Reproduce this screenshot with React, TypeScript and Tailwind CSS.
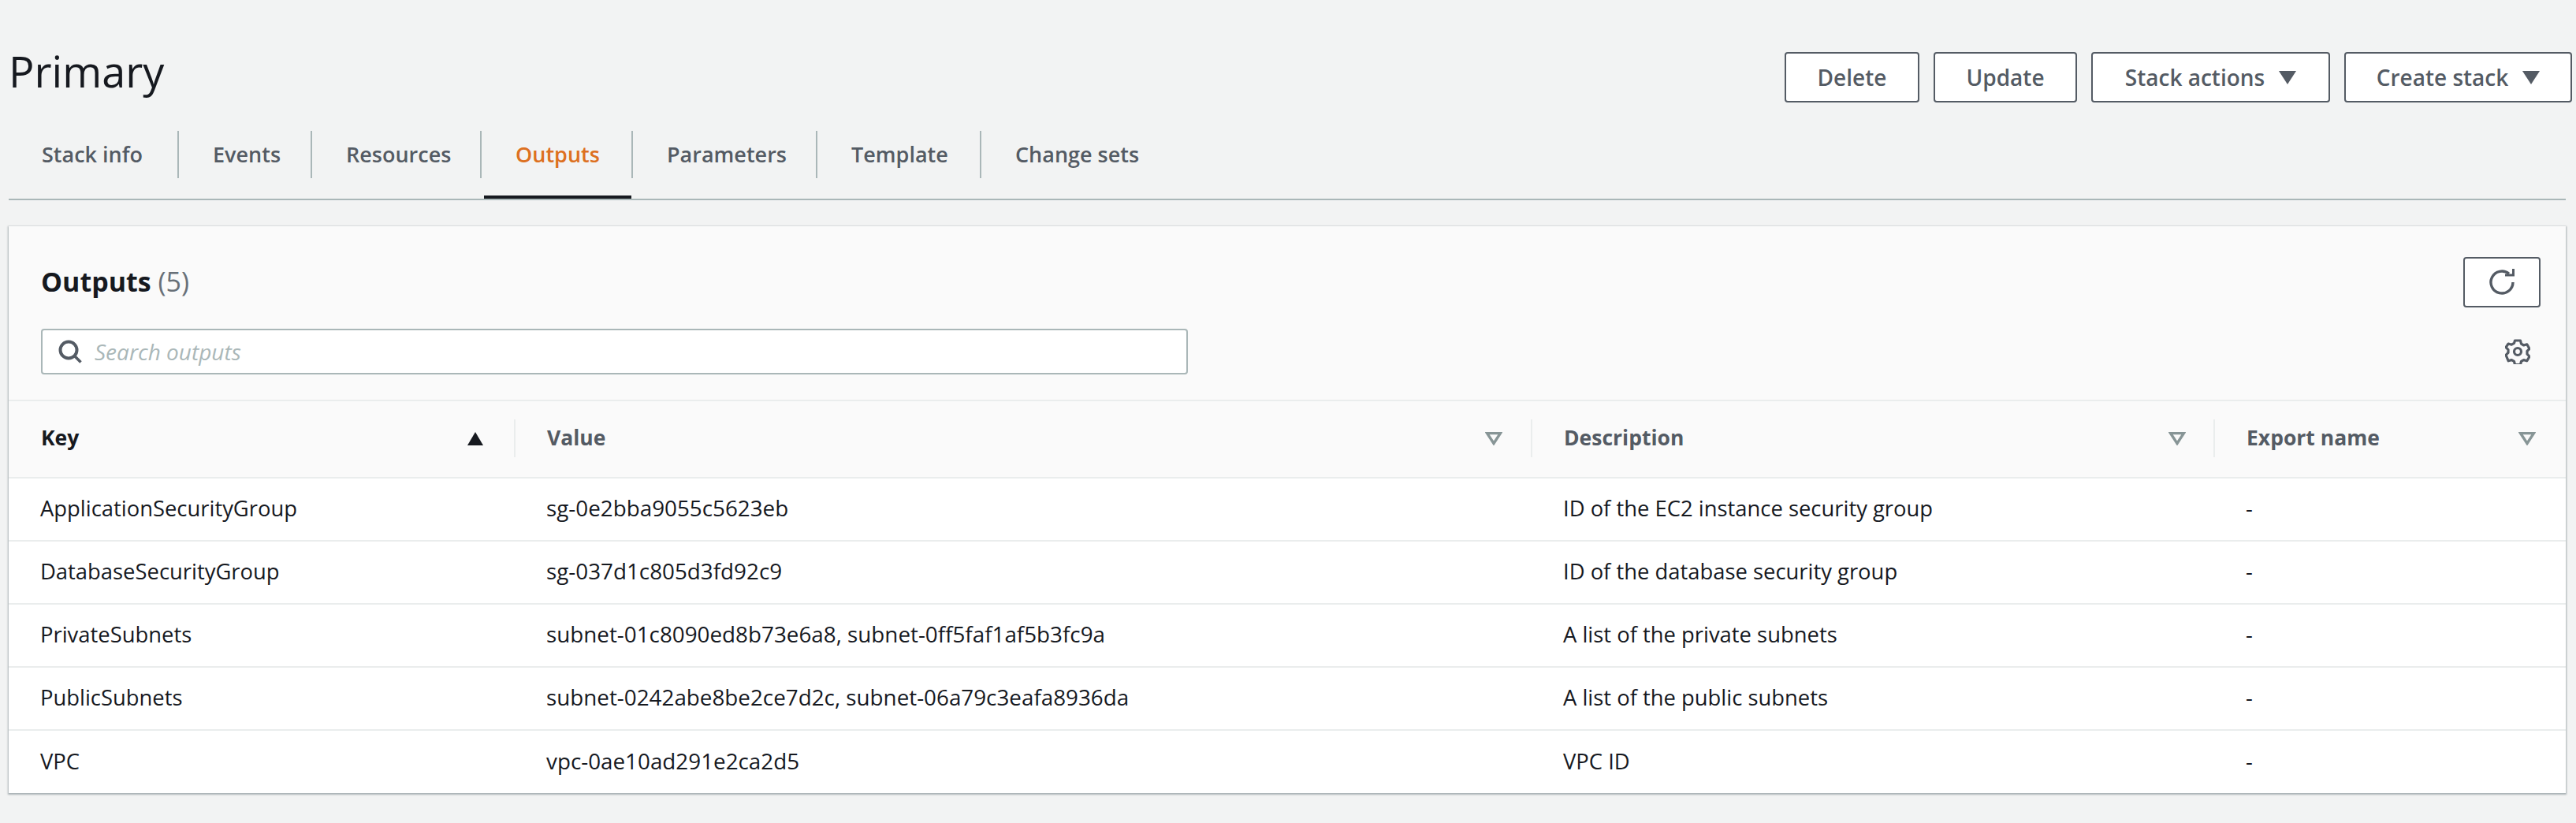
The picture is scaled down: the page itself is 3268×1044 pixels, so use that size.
const tabs = [
    { label: "Stack info", width: "w-[216px]", padding: "pl-[42px]" },
    { label: "Events", width: "w-[169px]", padding: "pl-[43px]" },
    { label: "Resources", width: "w-[215px]", padding: "pl-[43px]" },
    { label: "Outputs", width: "w-[192px]", padding: "pl-[43px]" },
    { label: "Parameters", width: "w-[234px]", padding: "pl-[43px]" },
    { label: "Template", width: "w-[208px]", padding: "pl-[43px]" },
    { label: "Change sets", width: "w-[200px]", padding: "pl-[43px]" },
]

const rows = [
    ["ApplicationSecurityGroup", "sg-0e2bba9055c5623eb", "ID of the EC2 instance security group"],
    ["DatabaseSecurityGroup", "sg-037d1c805d3fd92c9", "ID of the database security group"],
    ["PrivateSubnets", "subnet-01c8090ed8b73e6a8, subnet-0ff5faf1af5b3fc9a", "A list of the private subnets"],
    ["PublicSubnets", "subnet-0242abe8be2ce7d2c, subnet-06a79c3eafa8936da", "A list of the public subnets"],
    ["VPC", "vpc-0ae10ad291e2ca2d5", "VPC ID"],
]

const Caret = () => (
    <svg width="22" height="18" viewBox="0 0 22 18" className="ml-[18px]">
        <path d="M0 1h22l-11 17z" fill="#545b64" />
    </svg>
)

const FilterIcon = () => (
    <svg width="22" height="17" viewBox="0 0 22 17">
        <path d="M2.500 1.500h17l-8.500 13z" fill="none" stroke="#879596" strokeWidth="3.400" />
    </svg>
)

const RefreshIcon = () => (
    <svg width="34" height="34" viewBox="0 0 34 34" fill="none">
        <path d="M31 17a14 14 0 1 1-5-10.700" stroke="#545b64" strokeWidth="3.400" />
        <path d="M21 9.500h12V0h-3v6.500h-9z" fill="#545b64" />
    </svg>
)

const GearIcon = () => (
    <svg width="32" height="32" viewBox="0 0 32 32" fill="none" stroke="#545b64" strokeWidth="3.200" strokeLinejoin="round">
        <path d="M12.500 2h7l1 4.200 3.200 1.800 4.100-1.200 3.200 5.600-3 3v3.800l3 3-3.200 5.600-4.100-1.200-3.200 1.800-1 4.200h-7l-1-4.200-3.200-1.800-4.100 1.200L1 20.400l3-3v-3.800l-3-3L4.200 6l4.100 1.200 3.200-1.800z" />
        <circle cx="16" cy="16" r="4.500" />
    </svg>
)

const SearchIcon = () => (
    <svg width="30" height="30" viewBox="0 0 30 30" fill="none" stroke="#545b64">
        <circle cx="13" cy="13" r="10.500" strokeWidth="4" />
        <path d="M20 20l8.500 8.500" strokeWidth="3.500" />
    </svg>
)

const ActionButton = ({ label, width, caret }: { label: string; width: string; caret?: boolean }) => (
    <button className={`h-16 ${width} flex items-center justify-center rounded border-2 border-[#545b64] bg-white text-[28px] font-semibold text-[#545b64]`}>
        {label}
        {caret && <Caret />}
    </button>
)

export default function App() {
    return (
        <div className="h-[1044px] w-[3268px] overflow-hidden bg-[#f2f3f3] pl-[11px] pr-[13px] pt-[66px] font-['Open_Sans',sans-serif] text-[#16191f]">
            <div className="flex items-start justify-between">
                <h1 className="-mt-2 text-[54px] leading-[64px]">Primary</h1>
                <div className="flex gap-[18px] -mr-2">
                    <ActionButton label="Delete" width="w-[171px]" />
                    <ActionButton label="Update" width="w-[182px]" />
                    <ActionButton label="Stack actions" width="w-[303px]" caret />
                    <ActionButton label="Create stack" width="w-[289px]" caret />
                </div>
            </div>

            {/* Tabs */}
            <div className="mt-9 flex h-[88px] border-b-2 border-[#aab7b8]">
                {tabs.map((tab, i) => (
                    <div key={tab.label} className={`relative flex h-[60px] flex-none items-center whitespace-nowrap text-[27px] font-semibold ${tab.padding} ${tab.width} ${i < tabs.length - 1 ? "border-r-2 border-[#aab7b8]" : ""} ${tab.label === "Outputs" ? "text-[#dd7020]" : "text-[#545b64]"}`}>
                        {tab.label}
                        {tab.label === "Outputs" && <div className="absolute -bottom-[26px] left-[3px] right-0 h-1 bg-[#16191f]" />}
                    </div>
                ))}
            </div>

            {/* Outputs panel */}
            <div className="mt-[33px] bg-white shadow-[0_1px_2px_1px_rgba(0,28,36,0.3)]">
                <div className="bg-[#fafafa]">
                    <div className="flex items-center justify-between pl-[41px] pr-8 pt-[39px]">
                        <h2 className="-mt-0.5 text-[34px] font-bold leading-[46px]">
                            Outputs <span className="font-normal text-[#687078]">(5)</span>
                        </h2>
                        <button className="flex h-16 w-[98px] items-center justify-center rounded border-2 border-[#545b64] bg-white">
                            <RefreshIcon />
                        </button>
                    </div>
                    <div className="flex items-center justify-between pl-[41px] pr-[45px] pb-8 pt-[27px]">
                        <div className="flex h-[58px] w-[1455px] items-center gap-4 rounded-sm border-2 border-[#aab7b8] bg-white pl-5">
                            <SearchIcon />
                            <span className="text-[28px] italic text-[#aab7b8]">Search outputs</span>
                        </div>
                        <GearIcon />
                    </div>
                </div>

                <table className="w-full table-fixed border-collapse">
                    <thead>
                        <tr className="h-[98px] border-y-2 border-[#eaeded] bg-[#fafafa] text-[26.500px] font-semibold text-[#545b64]">
                            <th className="w-[643px] pl-[41px] pr-[38px] text-left">
                                <div className="-mr-[38px] flex h-12 -translate-y-px items-center justify-between border-r-2 border-[#eaeded] pr-[38px]">
                                    <span className="font-bold text-[#16191f]">Key</span>
                                    <svg width="22" height="17" viewBox="0 0 22 17">
                                        <path d="M11 0l10 17H1z" fill="#16191f" />
                                    </svg>
                                </div>
                            </th>
                            <th className="w-[1290px] text-left">
                                <div className="flex h-12 -translate-y-px items-center justify-between border-r-2 border-[#eaeded] pl-10 pr-9">
                                    Value
                                    <FilterIcon />
                                </div>
                            </th>
                            <th className="w-[866px] text-left">
                                <div className="flex h-12 -translate-y-px items-center justify-between border-r-2 border-[#eaeded] pl-10 pr-[35px]">
                                    Description
                                    <FilterIcon />
                                </div>
                            </th>
                            <th className="text-left">
                                <div className="flex h-12 -translate-y-px items-center justify-between pl-10 pr-[38px]">
                                    Export name
                                    <FilterIcon />
                                </div>
                            </th>
                        </tr>
                    </thead>
                    <tbody className="text-[27.400px]">
                        {rows.map((row) => (
                            <tr key={row[0]} className="h-20 border-b-2 border-[#eaeded] last:border-b-0">
                                <td className="pb-0.5 pl-10">{row[0]}</td>
                                <td className="pb-0.5 pl-[39px] text-[27.800px]">{row[1]}</td>
                                <td className="pb-0.5 pl-[39px]">{row[2]}</td>
                                <td className="pb-0.5 pl-[39px]">-</td>
                            </tr>
                        ))}
                    </tbody>
                </table>
            </div>
        </div>
    )
}
